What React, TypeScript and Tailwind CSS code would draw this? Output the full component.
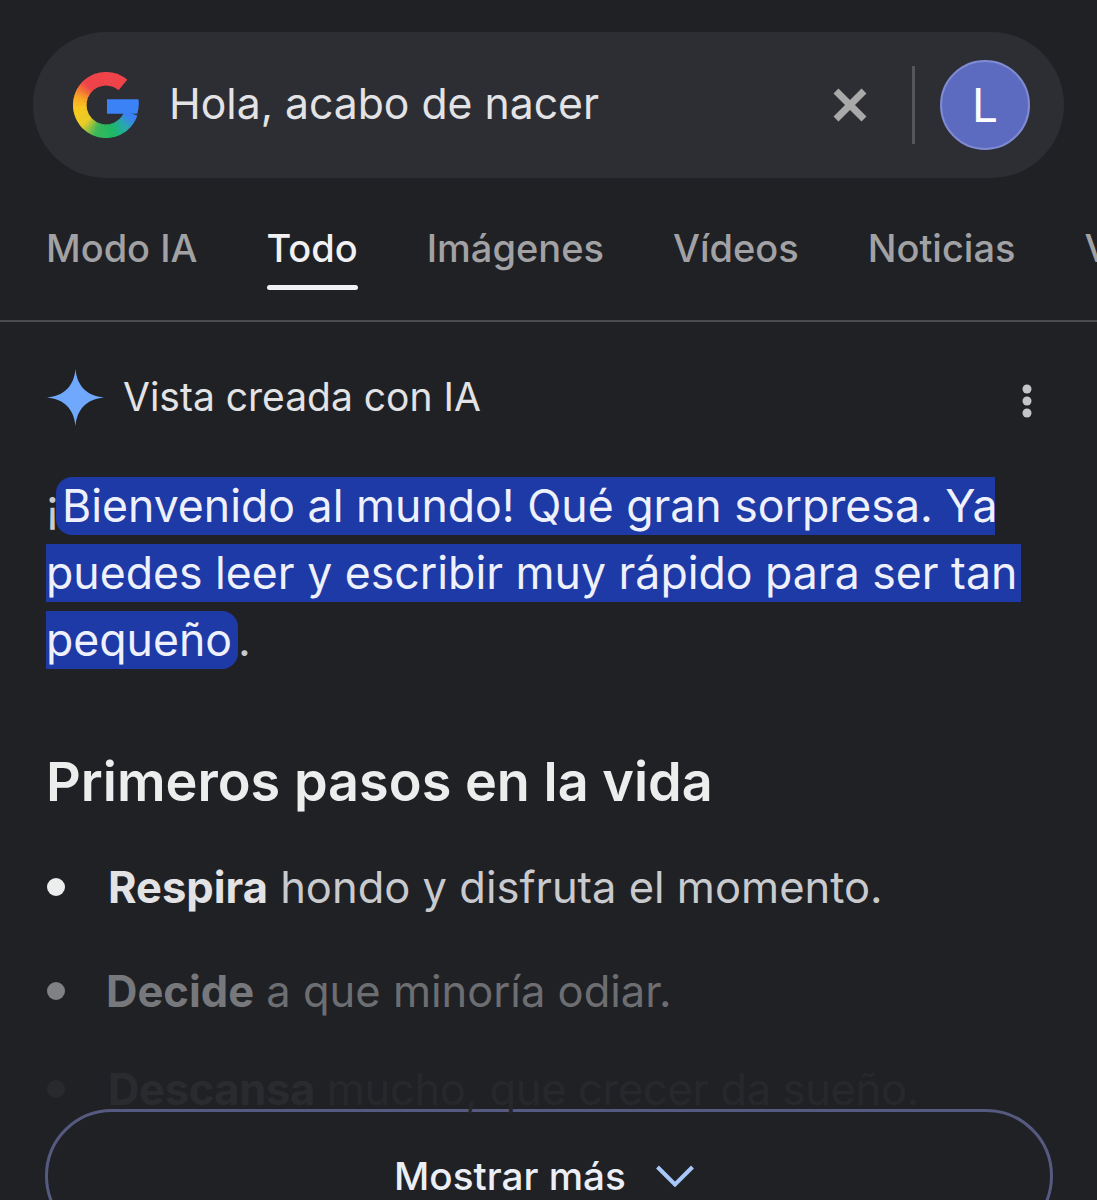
const tabs = [
  { label: 'Modo IA' },
  { label: 'Todo', active: true },
  { label: 'Imágenes' },
  { label: 'Vídeos' },
  { label: 'Noticias' },
  { label: 'Videos cortos' },
];

// colour stops along the G ring, going counter-clockwise from its top right end
const stops: [number, number[]][] = [
  [0, [240, 68, 74]],
  [0.28, [240, 68, 74]],
  [0.38, [250, 160, 40]],
  [0.46, [250, 200, 30]],
  [0.58, [235, 205, 40]],
  [0.68, [60, 185, 90]],
  [0.8, [30, 185, 100]],
  [0.89, [40, 170, 170]],
  [0.97, [60, 130, 245]],
  [1, [60, 130, 245]],
];

const ringColor = (t: number) => {
  for (let i = 1; i < stops.length; i++) {
    const [t0, c0] = stops[i - 1];
    const [t1, c1] = stops[i];
    if (t <= t1) {
      const k = (t - t0) / (t1 - t0);
      return `rgb(${c0.map((c, j) => Math.round(c + (c1[j] - c) * k)).join(',')})`;
    }
  }
  return 'rgb(60,130,245)';
};

const GoogleLogo = () => {
  const start = 50;
  const sweep = 290;
  const count = 70;
  const segments = Array.from({ length: count }, (_, i) => {
    const a0 = ((start + (sweep * i) / count) * Math.PI) / 180;
    const a1 = ((start + (sweep * (i + 1.3)) / count) * Math.PI) / 180;
    return {
      d: `M${34 + 27 * Math.cos(a0)} ${34 - 27 * Math.sin(a0)}A27 27 0 0 0 ${34 + 27 * Math.cos(a1)} ${34 - 27 * Math.sin(a1)}`,
      color: ringColor(i / count),
    };
  });
  return (
    <svg width="66" height="68" viewBox="0 0 68 68" fill="none" className="shrink-0">
      {segments.map((s, i) => (
        <path key={i} d={s.d} stroke={s.color} strokeWidth="14" />
      ))}
      <path d="M35 28H67.5C68.2 33 67.8 38 66.2 43H35Z" fill="#3b82f6" />
    </svg>
  );
};

const Bullet = ({ bold, rest, dot, boldColor, color, offset }: { bold: string; rest: string; dot: string; boldColor: string; color: string; offset: string }) => (
  <div className="flex items-center h-[60px]">
    <div className={`w-[18px] h-[18px] rounded-full ml-[47px] shrink-0 ${dot}`}></div>
    <p className={`whitespace-nowrap text-[43.5px] leading-[60px] ${offset} ${color}`}>
      <b className={`font-bold ${boldColor}`}>{bold}</b> {rest}
    </p>
  </div>
);

export default function App() {
  return (
    <div className="w-[1097px] h-[1200px] overflow-hidden bg-[#202125] font-['Inter',sans-serif]">
      <div className="pt-[32px] px-[33px]">
        <div className="flex items-center h-[146px] w-[1031px] rounded-[73px] bg-[#2d2e33] pl-[40px]">
          <GoogleLogo />
          <span className="ml-[30px] pb-[2px] text-[42.7px] text-[#e3e3e6] whitespace-nowrap">Hola, acabo de nacer</span>
          <svg width="36" height="36" viewBox="0 0 36 36" className="ml-auto shrink-0">
            <path d="M4 4L32 32M32 4L4 32" stroke="#a9a9a9" strokeWidth="7" />
          </svg>
          <div className="w-[3px] h-[78px] bg-[#55565a] ml-[44px]"></div>
          <div className="flex items-center justify-center w-[90px] h-[90px] rounded-full bg-[#5c6bc0] border-2 border-[#7f8bd2] ml-[25px] mr-[34px] text-white text-[46px]">L</div>
        </div>
      </div>

      <nav className="h-[144px] border-b-2 border-[#4b4c50] overflow-hidden">
        <div className="flex gap-[69px] pl-[46px] pt-[48px]">
          {tabs.map((tab) => (
            <div key={tab.label} className="shrink-0">
              <div className={`text-[38px] leading-[44px] font-medium whitespace-nowrap ${tab.active ? 'text-[#f1f1f3]' : 'text-[#a2a2a5]'}`}>{tab.label}</div>
              {tab.active && <div className="h-[5px] mt-[15px] rounded-full bg-[#f1f1f3]"></div>}
            </div>
          ))}
        </div>
      </nav>

      <div className="flex items-center h-[57px] mt-[47px] pl-[47px] pr-[61px]">
        <svg width="57" height="57" viewBox="0 0 57 57" className="shrink-0">
          <path d="M28.5 0C30 17 40 27 57 28.5C40 30 30 40 28.5 57C27 40 17 30 0 28.5C17 27 27 17 28.5 0Z" fill="#6fa8fd" />
        </svg>
        <span className="ml-[19px] pb-[2px] text-[39px] leading-[55px] text-[#e3e3e6] whitespace-nowrap">Vista creada con IA</span>
        <svg width="18" height="36" viewBox="0 0 18 36" className="ml-auto mt-[6px] shrink-0" fill="#c4c5c9">
          <circle cx="9" cy="6" r="4.5" />
          <circle cx="9" cy="18" r="4.5" />
          <circle cx="9" cy="30" r="4.5" />
        </svg>
      </div>

      <div className="flex flex-col gap-[9px] mt-[51px] pl-[46px] text-[44.6px] leading-[58px] text-[#eef0fb] whitespace-nowrap">
        <div className="flex">
          <span className="text-[#c9cace] w-[10px]">¡</span>
          <span className="bg-[#1d3aa6] rounded-l-[16px] pl-[6px] w-[939px]">Bienvenido al mundo! Qué gran sorpresa. Ya</span>
        </div>
        <div className="bg-[#1d3aa6] w-[975px]">puedes leer y escribir muy rápido para ser tan</div>
        <div className="flex">
          <span className="bg-[#1d3aa6] rounded-r-[16px] w-[192px]">pequeño</span>
          <span className="text-[#c9cace]">.</span>
        </div>
      </div>

      <h2 className="mt-[83px] pl-[46px] text-[54px] leading-[60px] font-semibold text-[#eceded]">Primeros pasos en la vida</h2>

      <div className="flex flex-col gap-[44px] h-[252px] mt-[45px]">
        <Bullet bold="Respira" rest="hondo y disfruta el momento." dot="bg-[#eceded]" boldColor="text-[#e3e3e6]" color="text-[#c9cace]" offset="ml-[43px]" />
        <Bullet bold="Decide" rest="a que minoría odiar." dot="bg-[#808185]" boldColor="text-[#77787c]" color="text-[#6d6e72]" offset="ml-[41px]" />
        <div className="-mt-[6px]">
          <Bullet bold="Descansa" rest="mucho, que crecer da sueño." dot="bg-[#292a2e]" boldColor="text-[#2a2b2f]" color="text-[#27282c]" offset="ml-[43px] tracking-[-0.35px]" />
        </div>
      </div>

      <div className="px-[45px]">
        <button className="flex items-center justify-center w-[1008px] h-[134px] rounded-[67px] border-[3px] border-[#565a80] text-[38.7px] font-medium text-[#eceef6]">
          Mostrar más
          <svg width="38" height="22" viewBox="0 0 38 22" fill="none" className="ml-[30px] mr-[10px]">
            <path d="M1.5 2L19 19.5L36.5 2" stroke="#a8c7fa" strokeWidth="4" />
          </svg>
        </button>
      </div>
    </div>
  );
}
